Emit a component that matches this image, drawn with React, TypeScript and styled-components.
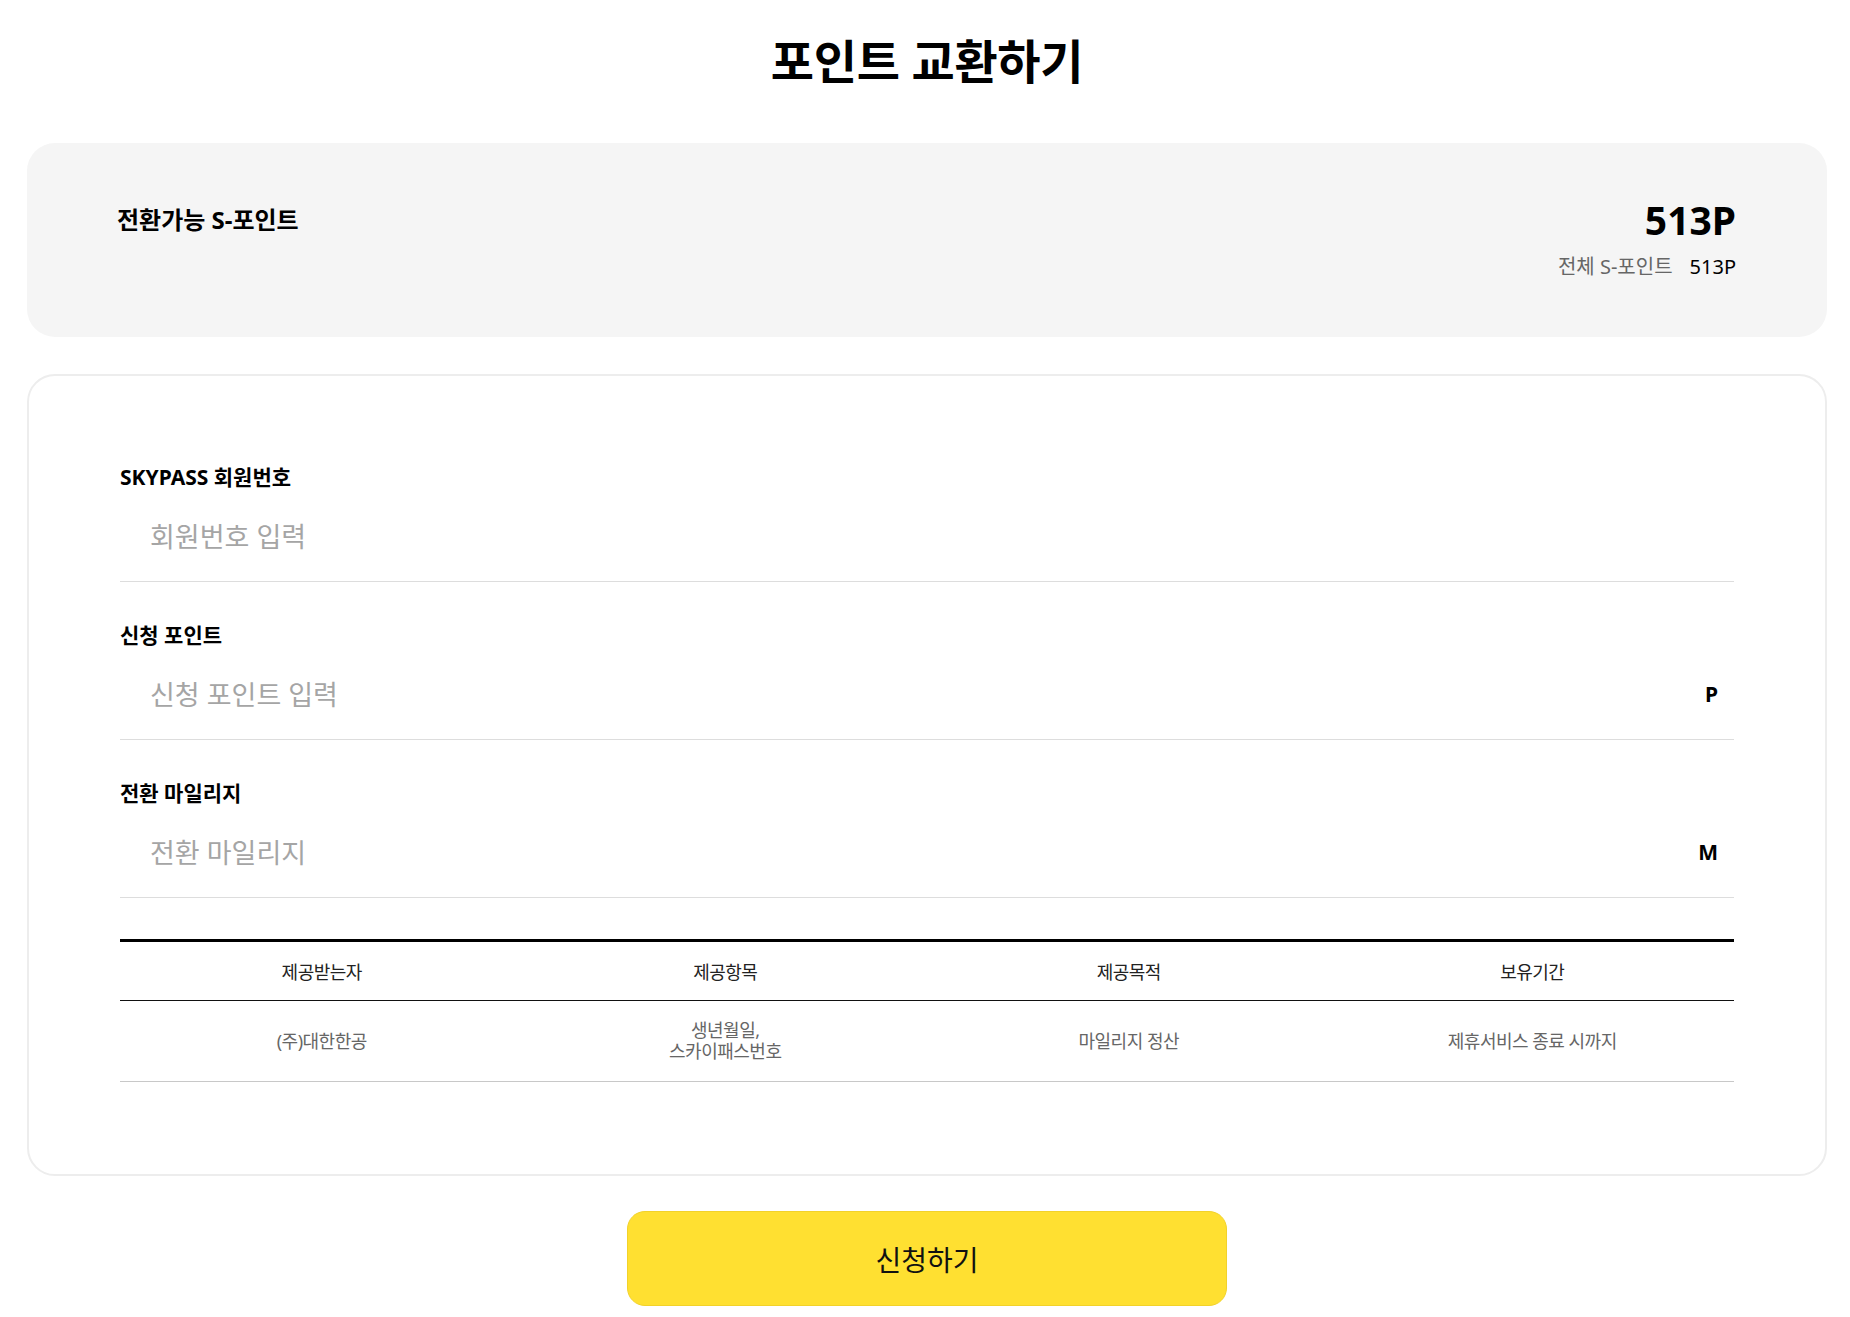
import React from "react";
import styled, { createGlobalStyle } from "styled-components";

const GlobalStyle = createGlobalStyle`
  body {
    margin: 0;
    background: #fff;
    font-family: "Noto Sans", "Noto Sans CJK KR", sans-serif;
    color: #000;
  }
`;

interface IField {
  label: string;
  placeholder: string;
  unit?: string;
}

const fields: IField[] = [
  { label: "SKYPASS 회원번호", placeholder: "회원번호 입력" },
  { label: "신청 포인트", placeholder: "신청 포인트 입력", unit: "P" },
  { label: "전환 마일리지", placeholder: "전환 마일리지", unit: "M" },
];

const headers = ["제공받는자", "제공항목", "제공목적", "보유기간"];
const cells = [
  "(주)대한한공",
  "생년월일,\n스카이패스번호",
  "마일리지 정산",
  "제휴서비스 종료 시까지",
];

const App: React.FC = () => {
  return (
    <>
      <GlobalStyle />
      <Page>
        <Title>포인트 교환하기</Title>

        <Summary>
          <SummaryLabel>전환가능 S-포인트</SummaryLabel>
          <SummaryValues>
            <BigPoint>513P</BigPoint>
            <TotalRow>
              <TotalLabel>전체 S-포인트</TotalLabel>
              <TotalValue>513P</TotalValue>
            </TotalRow>
          </SummaryValues>
        </Summary>

        <FormCard>
          {fields.map((f) => (
            <Field key={f.label}>
              <FieldLabel>{f.label}</FieldLabel>
              <InputRow>
                <Input placeholder={f.placeholder} />
                {f.unit && <Unit>{f.unit}</Unit>}
              </InputRow>
            </Field>
          ))}

          <Table>
            <thead>
              <tr>
                {headers.map((h) => (
                  <Th key={h}>{h}</Th>
                ))}
              </tr>
            </thead>
            <tbody>
              <tr>
                {cells.map((c) => (
                  <Td key={c}>{c}</Td>
                ))}
              </tr>
            </tbody>
          </Table>
        </FormCard>

        <SubmitButton>신청하기</SubmitButton>
      </Page>
    </>
  );
};

export default App;

const Page = styled.main`
  padding: 0 23px 12px 27px;
  display: flex;
  flex-direction: column;
  align-items: stretch;
`;

const Title = styled.h1`
  margin: 24px 0 0;
  height: 119px;
  font-size: 47px;
  font-weight: 700;
  line-height: 74px;
  text-align: center;
  letter-spacing: -0.3px;
`;

const Summary = styled.section`
  background: #f5f5f5;
  border-radius: 28px;
  padding: 52px 91px 52px 90px;
  display: flex;
  justify-content: space-between;
  align-items: flex-start;
`;

const SummaryLabel = styled.h2`
  margin: 0;
  font-size: 24px;
  font-weight: 700;
  line-height: 50px;
`;

const SummaryValues = styled.div`
  display: flex;
  flex-direction: column;
  align-items: flex-end;
`;

const BigPoint = styled.strong`
  font-size: 39px;
  font-weight: 700;
  line-height: 50px;
`;

const TotalRow = styled.div`
  display: flex;
  gap: 17px;
  font-size: 20px;
  line-height: 36px;
  margin-top: 4px;
`;

const TotalLabel = styled.span`
  color: #666;
`;

const TotalValue = styled.span`
  color: #000;
`;

const FormCard = styled.section`
  margin-top: 37px;
  border: 2px solid #ededed;
  border-radius: 28px;
  padding: 87px 91px 92px 91px;
  display: flex;
  flex-direction: column;
`;

const Field = styled.div`
  display: flex;
  flex-direction: column;
  & + & {
    margin-top: 39px;
  }
`;

const FieldLabel = styled.label`
  font-size: 21px;
  font-weight: 700;
  line-height: 28px;
`;

const InputRow = styled.div`
  display: flex;
  align-items: center;
  height: 90px;
  border-bottom: 1px solid #ddd;
  padding: 0 16px 0 30px;
`;

const Input = styled.input`
  flex: 1;
  border: none;
  outline: none;
  background: transparent;
  font-family: "Noto Sans", "Noto Sans CJK KR", sans-serif;
  font-size: 27px;
  color: #000;
  padding: 0;
  &::placeholder {
    color: #a5a5a5;
  }
`;

const Unit = styled.span`
  font-size: 21px;
  font-weight: 700;
`;

const Table = styled.table`
  margin-top: 41px;
  width: 100%;
  border-collapse: collapse;
  table-layout: fixed;
  border-top: 3px solid #000;
  font-size: 18px;
  letter-spacing: -0.5px;
`;

const Th = styled.th`
  height: 56px;
  font-weight: 400;
  color: #222;
  border-bottom: 1px solid #111;
  text-align: center;
`;

const Td = styled.td`
  height: 78px;
  color: #666;
  text-align: center;
  line-height: 21px;
  white-space: pre-line;
  border-bottom: 1px solid #c8c8c8;
`;

const SubmitButton = styled.button`
  align-self: center;
  margin-top: 35px;
  width: 600px;
  height: 95px;
  background: #ffe031;
  border: 1px solid #f2d22a;
  border-radius: 18px;
  font-family: "Noto Sans", "Noto Sans CJK KR", sans-serif;
  font-size: 28px;
  color: #111;
  cursor: pointer;
`;
